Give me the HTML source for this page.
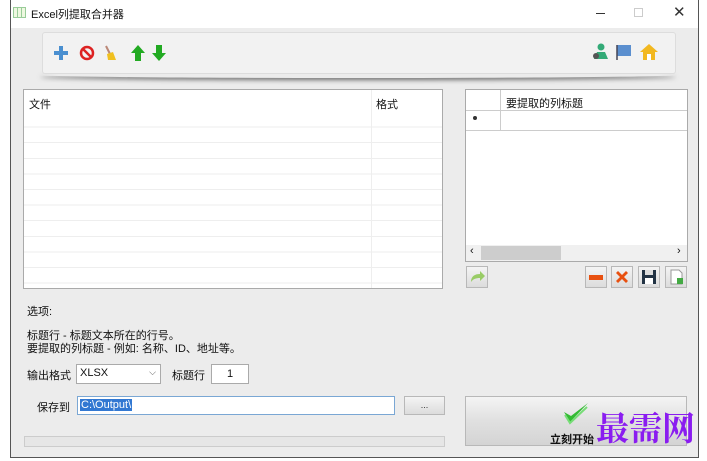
<!DOCTYPE html>
<html><head><meta charset="utf-8"><style>
*{margin:0;padding:0;box-sizing:border-box}
body{width:707px;height:461px;background:#fff;position:relative;overflow:hidden;font-family:"Liberation Sans","Noto Sans CJK SC",sans-serif;font-size:11px;color:#111}
.a{position:absolute}
.win{left:10px;top:0;width:689px;height:458px;border-left:1px solid #555;border-right:1px solid #555;border-bottom:1px solid #555;background:#ececec}
.tb{left:11px;top:0;width:687px;height:28px;background:#fff}
.btn{background:linear-gradient(#f4f4f4,#dcdcdc);border:1px solid #b8b8b8}
</style></head><body>
<div class="a win"></div>
<div class="a tb"></div>
<div class="a" style="left:13px;top:7px;width:13px;height:11px;border:1px solid #9c9;background:repeating-linear-gradient(90deg,#eef8e0 0 3px,#9c9 3px 4px)"></div>
<div class="a" style="left:31px;top:6px;font-size:11px">Excel列提取合并器</div>
<div class="a" style="left:596px;top:13px;width:9px;height:1px;background:#333"></div>
<div class="a" style="left:634px;top:8px;width:9px;height:9px;border:1px solid #ccc"></div>
<div class="a" style="left:673px;top:3px;font-size:15px;color:#333">✕</div>
<div class="a" style="left:40px;top:72px;width:636px;height:6px;border-radius:50%;box-shadow:0 2px 5px rgba(0,0,0,.55)"></div>
<div class="a" style="left:42px;top:32px;width:634px;height:42px;background:#f2f2f2;border:1px solid #ddd;border-radius:3px"></div>
<svg class="a" style="left:52px;top:44px" width="120" height="18">
<path d="M7 2h4v5h5v4h-5v5H7v-5H2V7h5z" fill="#4a8fd0"/>
<circle cx="35" cy="9" r="6" fill="none" stroke="#d22" stroke-width="2.5"/><path d="M31 5l8 8" stroke="#d22" stroke-width="2.5"/>
<path d="M54 2l4 8" stroke="#b87" stroke-width="2"/><path d="M55 10l6-2 3 8h-8z" fill="#f0c020"/>
<path d="M86 1l7 8h-4v8h-6V9h-4z" fill="#2a2"/>
<path d="M107 17l7-8h-4V1h-6v8h-4z" fill="#2a2"/>
</svg>
<svg class="a" style="left:590px;top:42px" width="70" height="20">
<circle cx="11" cy="5" r="3.5" fill="#3a7"/><path d="M4 17l3-7h8l3 7z" fill="#3a7"/><circle cx="6" cy="14" r="3" fill="#555"/>
<path d="M27 3h14v11H27z" fill="#5b8fcf"/><path d="M27 3v15" stroke="#445" stroke-width="1.5"/>
<path d="M59 2l9 8h-3v8h-12v-8h-3z" fill="#f2b820"/><rect x="57" y="12" width="4" height="6" fill="#fff"/>
</svg>
<div class="a" style="left:23px;top:89px;width:420px;height:200px;background:#fff;border:1px solid #aaa;background-image:repeating-linear-gradient(#fff 0 14.6px,#eee 14.6px 15.6px);background-position:0 22px"></div>
<div class="a" style="left:24px;top:90px;width:418px;height:33px;background:#fff"></div>
<div class="a" style="left:371px;top:90px;width:1px;height:198px;background:#eee"></div>
<div class="a" style="left:29px;top:96px">文件</div>
<div class="a" style="left:376px;top:96px">格式</div>
<div class="a" style="left:465px;top:89px;width:223px;height:173px;background:#fff;border:1px solid #aaa"></div>
<div class="a" style="left:466px;top:110px;width:221px;height:1px;background:#ccc"></div>
<div class="a" style="left:466px;top:130px;width:221px;height:1px;background:#ccc"></div>
<div class="a" style="left:500px;top:90px;width:1px;height:40px;background:#ccc"></div>
<div class="a" style="left:506px;top:95px">要提取的列标题</div>
<div class="a" style="left:473px;top:116px;width:4px;height:4px;border-radius:50%;background:#333"></div>
<div class="a" style="left:466px;top:245px;width:221px;height:16px;background:#f0f0f0"></div>
<div class="a" style="left:481px;top:246px;width:80px;height:14px;background:#cdcdcd"></div>
<div class="a" style="left:470px;top:245px;font-size:11px">‹</div>
<div class="a" style="left:677px;top:245px;font-size:11px">›</div>
<div class="a btn" style="left:466px;top:266px;width:22px;height:22px"><svg width="20" height="20"><path d="M4 15c0-6 4-8 9-8V4l5 5-5 5v-3c-4 0-7 1-9 4z" fill="#9c6"/></svg></div>
<div class="a btn" style="left:585px;top:266px;width:22px;height:22px"><div class="a" style="left:3px;top:8px;width:14px;height:5px;background:#e85010"></div></div>
<div class="a btn" style="left:611px;top:266px;width:22px;height:22px"><svg width="20" height="20"><path d="M4 6l2-2 4 4 4-4 2 2-4 4 4 4-2 2-4-4-4 4-2-2 4-4z" fill="#e85010"/></svg></div>
<div class="a btn" style="left:638px;top:266px;width:22px;height:22px"><svg width="20" height="20"><rect x="3" y="3" width="14" height="14" fill="#234"/><rect x="6" y="3" width="8" height="5" fill="#ddd"/><rect x="6" y="11" width="8" height="6" fill="#fff"/></svg></div>
<div class="a btn" style="left:665px;top:266px;width:22px;height:22px"><svg width="20" height="20"><path d="M5 3h8l3 3v11H5z" fill="#fff" stroke="#999"/><rect x="11" y="11" width="6" height="6" fill="#4a4"/></svg></div>
<div class="a" style="left:27px;top:303px">选项:</div>
<div class="a" style="left:27px;top:327px">标题行 - 标题文本所在的行号。</div>
<div class="a" style="left:27px;top:340px">要提取的列标题 - 例如: 名称、ID、地址等。</div>
<div class="a" style="left:27px;top:367px">输出格式</div>
<div class="a" style="left:76px;top:364px;width:85px;height:20px;background:#fff;border:1px solid #aaa;padding:2px 3px">XLSX<span style="position:absolute;right:4px;top:2px;font-size:9px;color:#555">⌵</span></div>
<div class="a" style="left:172px;top:367px">标题行</div>
<div class="a" style="left:211px;top:364px;width:38px;height:20px;background:#fff;border:1px solid #aaa;text-align:center;padding-top:3px">1</div>
<div class="a" style="left:37px;top:399px">保存到</div>
<div class="a" style="left:77px;top:396px;width:318px;height:19px;background:#fff;border:1px solid #7aa7d4;padding:2px"><span style="background:#3278d2;color:#fff;padding:0 1px">C:\Output\</span></div>
<div class="a btn" style="left:404px;top:396px;width:41px;height:19px;text-align:center;font-size:9px;color:#333;padding-top:3px">...</div>
<div class="a" style="left:24px;top:436px;width:421px;height:11px;background:#e6e6e6;border:1px solid #ccc"></div>
<div class="a btn" style="left:465px;top:396px;width:222px;height:50px;background:linear-gradient(#f4f4f4,#e0e0e0 50%,#d4d4d4)"></div>
<svg class="a" style="left:562px;top:400px" width="28" height="28"><path d="M2 12l6 10L26 3 9 16z" fill="#3b3"/><path d="M3 15l5 8L25 7" stroke="#7d7" stroke-width="2" fill="none"/></svg>
<div class="a" style="left:550px;top:431px;font-weight:bold;font-size:11px">立刻开始</div>
<div class="a" style="left:596px;top:407px;font-size:33px;color:#8a1cf0;font-family:'Noto Serif CJK SC',serif;font-weight:bold;line-height:40px">最需网</div>
</body></html>
